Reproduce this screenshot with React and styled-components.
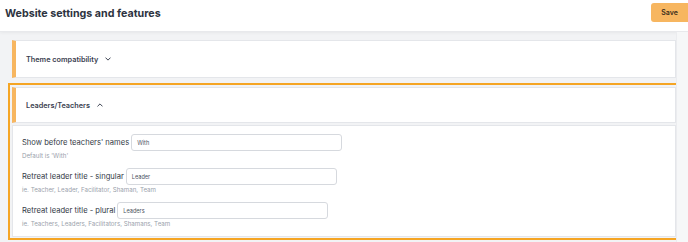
import React from "react";
import styled, { createGlobalStyle } from "styled-components";

const Global = createGlobalStyle`
  html, body { margin: 0; padding: 0; }
  body {
    background: #f2f3f5;
    font-family: Inter, "Noto Sans", sans-serif;
    color: #374151;
    width: 688px;
    height: 242px;
    overflow: hidden;
  }
`;

const Page = styled.div`
  display: flex;
  flex-direction: column;
  height: 242px;
`;

const Header = styled.header`
  height: 32px;
  background: #fff;
  display: flex;
  align-items: center;
  justify-content: space-between;
  padding-left: 5px;
  box-shadow: 0 1px 3px rgba(0,0,0,0.05);
  border-bottom: 1px solid #e8e9ec;
  box-sizing: border-box;
`;

const Title = styled.h1`
  margin: 0 0 4px 0;
  font-size: 10.7px;
  font-weight: 700;
  color: #2d3340;
`;

const SaveButton = styled.button`
  width: 37px;
  height: 19px;
  margin: 0 0 6px 0;
  border: none;
  border-radius: 3px 0 0 3px;
  background: #f7b660;
  color: #3d2f1c;
  font-family: inherit;
  font-size: 7px;
  font-weight: 600;
  padding: 0;
`;

const Body = styled.div`
  flex: 1;
  display: flex;
`;

const Main = styled.main`
  flex: 1;
  padding: 8px 0 0 8px;
  display: flex;
  flex-direction: column;
  gap: 5px;
`;

const ScrollTrack = styled.div`
  width: 11px;
  background: #f6f7f8;
  border-left: 1px solid #ebecef;
`;

const Card = styled.section`
  margin-left: 4px;
  background: #fff;
  border: 1px solid #e4e6ea;
  border-left: 4px solid #f7b660;
  height: 38px;
  box-sizing: border-box;
  display: flex;
  align-items: center;
  padding-left: 10px;
  gap: 7px;
`;

const CardTitle = styled.span`
  font-size: 7.3px;
  font-weight: 600;
  color: #3a4150;
`;

const Chevron = ({ up }) => (
  <svg width="6" height="4" viewBox="0 0 8 5" fill="none">
    <path
      d={up ? "M1 4L4 1L7 4" : "M1 1L4 4L7 1"}
      stroke="#3a4150"
      strokeWidth="1.3"
      strokeLinecap="round"
      strokeLinejoin="round"
    />
  </svg>
);

const Focused = styled.div`
  border: 2px solid #f5a524;
  margin-right: -3px;
  padding: 2px 1px 1px 2px;
  display: flex;
  flex-direction: column;
  gap: 2px;
  height: 157px;
  box-sizing: border-box;
`;

const OpenCard = styled(Card)`
  margin-left: 0;
  height: 37px;
`;

const Panel = styled.div`
  flex: 1;
  background: #fff;
  border: 1px solid #e4e6ea;
  padding: 8px 10px 0 9px;
  display: flex;
  flex-direction: column;
`;

const Field = styled.div`
  height: 34px;
  display: flex;
  flex-direction: column;
`;

const Row = styled.div`
  display: flex;
  align-items: center;
  gap: 2px;
`;

const Label = styled.label`
  font-size: 7.6px;
  color: #333a46;
  white-space: nowrap;
`;

const Input = styled.div`
  width: 211px;
  height: 17px;
  box-sizing: border-box;
  border: 1px solid #d6d9de;
  border-radius: 3px;
  font-size: 5.6px;
  color: #4b5260;
  display: flex;
  align-items: center;
  padding-left: 5px;
`;

const Help = styled.div`
  font-size: 6.2px;
  line-height: 8px;
  color: #9aa1ab;
  margin-top: 1px;
`;

const fields = [
  { label: "Show before teachers' names", value: "With", help: "Default is 'With'" },
  { label: "Retreat leader title - singular", value: "Leader", help: "ie. Teacher, Leader, Facilitator, Shaman, Team" },
  { label: "Retreat leader title - plural", value: "Leaders", help: "ie. Teachers, Leaders, Facilitators, Shamans, Team" },
];

export default function App() {
  return (
    <>
      <Global />
      <Page>
        <Header>
          <Title>Website settings and features</Title>
          <SaveButton>Save</SaveButton>
        </Header>
        <Body>
          <Main>
            <Card>
              <CardTitle>Theme compatibility</CardTitle>
              <Chevron />
            </Card>
            <Focused>
              <OpenCard>
                <CardTitle>Leaders/Teachers</CardTitle>
                <Chevron up />
              </OpenCard>
              <Panel>
                {fields.map((f) => (
                  <Field key={f.label}>
                    <Row>
                      <Label>{f.label}</Label>
                      <Input>{f.value}</Input>
                    </Row>
                    <Help>{f.help}</Help>
                  </Field>
                ))}
              </Panel>
            </Focused>
          </Main>
          <ScrollTrack />
        </Body>
      </Page>
    </>
  );
}
